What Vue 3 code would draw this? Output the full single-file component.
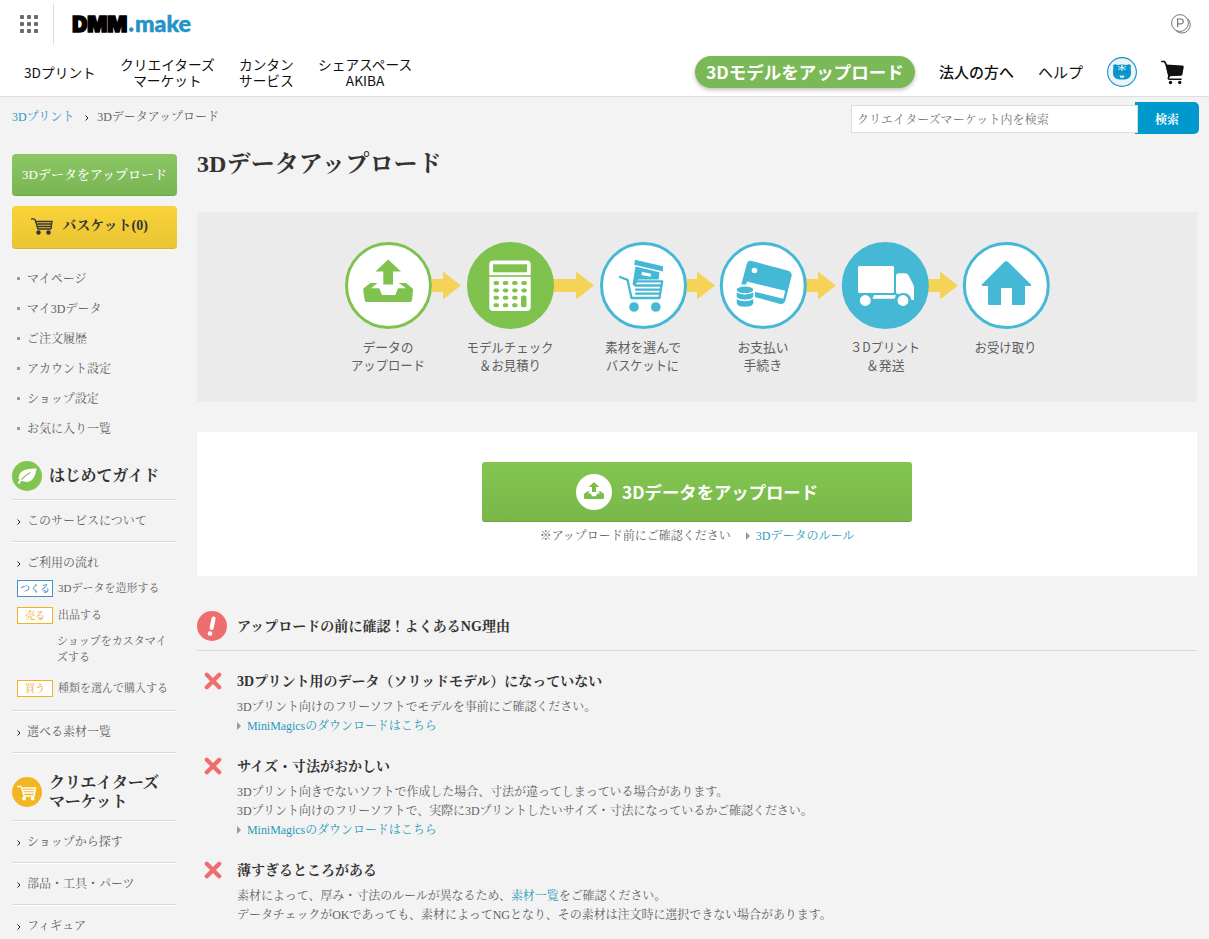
<script setup>
const globalNav = [['3Dプリント'], ['クリエイターズ', 'マーケット'], ['カンタン', 'サービス'], ['シェアスペース', 'AKIBA']]
const myMenu = ['マイページ', 'マイ3Dデータ', 'ご注文履歴', 'アカウント設定', 'ショップ設定', 'お気に入り一覧']
const marketMenu = ['ショップから探す', '部品・工具・パーツ', 'フィギュア']
const dots = [0, 7, 14]
const arrows = [[432, 443], [553, 576], [687, 697], [806, 818], [928, 940]]
const labels = [
  ['データの', 362.5, 352, 51], ['アップロード', 351, 370, 74],
  ['モデルチェック', 466.5, 352, 87], ['＆お見積り', 479, 370, 62],
  ['素材を選んで', 605, 352, 76], ['バスケットに', 606, 370, 73],
  ['お支払い', 737.5, 352, 51], ['手続き', 743.5, 370, 38.5],
  ['３Dプリント', 850, 352, 70], ['＆発送', 866, 370, 38.5],
  ['お受け取り', 974.5, 352, 62]
]
const keys = [[0, 0], [1, 0], [2, 0], [3, 0], [0, 1], [1, 1], [2, 1], [3, 1], [0, 2], [1, 2], [2, 2], [0, 3], [1, 3], [2, 3]]
const reasons = [
  {
    title: '3Dプリント用のデータ（ソリッドモデル）になっていない',
    lines: [['3Dプリント向けのフリーソフトでモデルを事前にご確認ください。']],
    link: 'MiniMagicsのダウンロードはこちら'
  },
  {
    title: 'サイズ・寸法がおかしい',
    lines: [
      ['3Dプリント向きでないソフトで作成した場合、寸法が違ってしまっている場合があります。'],
      ['3Dプリント向けのフリーソフトで、実際に3Dプリントしたいサイズ・寸法になっているかご確認ください。']
    ],
    link: 'MiniMagicsのダウンロードはこちら'
  },
  {
    title: '薄すぎるところがある',
    lines: [
      ['素材によって、厚み・寸法のルールが異なるため、', '素材一覧', 'をご確認ください。'],
      ['データチェックがOKであっても、素材によってNGとなり、その素材は注文時に選択できない場合があります。']
    ]
  }
]
</script>

<template>
  <div class="page" lang="ja">
    <header class="header">
      <div class="top">
        <svg class="apps" width="19" height="19" viewBox="0 0 19 19">
          <template v-for="y in dots" :key="y">
            <rect v-for="x in dots" :key="x" :x="x" :y="y" width="4" height="4" rx="0.8" fill="#6b6b6b" />
          </template>
        </svg>
        <div class="divider"></div>
        <svg class="logo" width="120" height="24" viewBox="0 0 120 24">
          <text class="logo-dmm" x="0.2" y="19.700" textLength="55" lengthAdjust="spacingAndGlyphs">DMM</text>
          <circle cx="59.3" cy="17.6" r="2.3" fill="#2593c5" />
          <text class="logo-make" x="63" y="20" textLength="56" lengthAdjust="spacingAndGlyphs">make</text>
        </svg>
        <svg class="point" width="20" height="20" viewBox="0 0 20 20" fill="none" stroke="#777">
          <circle cx="9" cy="9" r="8.4" />
          <path d="M16.700 4.600A8.400 8.400 0 0 1 5 16.700" />
          <path d="M6.6 13.2V5h3.200a2.400 2.400 0 0 1 0 4.800H6.600" stroke-width="1.200" />
        </svg>
      </div>
      <nav class="nav">
        <a v-for="(item, i) in globalNav" :key="i" class="nav-item">
          <span v-for="line in item" :key="line">{{ line }}</span>
        </a>
        <a class="pill">3Dモデルをアップロード</a>
        <a class="corp">法人の方へ</a>
        <a class="help">ヘルプ</a>
        <svg class="avatar" width="30" height="30" viewBox="0 0 30 30">
          <circle cx="15" cy="15" r="14.4" fill="#edf3f4" stroke="#0b96cc" stroke-width="1.1" />
          <path d="M6.200 10C5.500 7 8.500 6.800 10 8c3-.8 7-.8 10 0 1.500-1.200 4.500-1 3.800 2-.5 1.500.3 2.500.3 5 0 6-3 7.500-9.100 7.500s-9.100-1.500-9.100-7.500c0-2.500.8-3.500.3-5z" fill="#0b96cc" />
          <path d="M11 9.300 14.500 11V8.500h1V11L19 9.300M11 12h8M15 10v4" fill="none" stroke="#d8edf5" stroke-width=".9" />
          <circle cx="10.200" cy="14.800" r="1" fill="#087aa8" /><circle cx="19.800" cy="14.800" r="1" fill="#087aa8" />
          <path d="M12.800 18.500h1.500l.7.700.7-.7h1.500v1.200c0 1.300-4.400 1.300-4.400 0z" fill="#edf3f4" />
        </svg>
        <svg class="cart" width="24" height="25" viewBox="0 0 24 25">
          <path d="M.8 1.500h2.700l1.700 3 3 12.500" fill="none" stroke="#111" stroke-width="1.700" stroke-linecap="round" />
          <path d="M4.500 4.400 21.400 5.600c1 .1 1.500.8 1.300 1.700l-1.300 7.300c-.1.700-.6 1-1.200 1.100L7.600 16.300z" fill="#111" />
          <path d="M8 16.500c-1.500 2-.6 2.800.6 2.800h11.500" fill="none" stroke="#111" stroke-width="1.400" stroke-linecap="round" />
          <circle cx="9.500" cy="22.500" r="1.700" fill="#111" /><circle cx="18.700" cy="22.500" r="1.700" fill="#111" />
        </svg>
      </nav>
    </header>

    <div class="subbar">
      <div class="crumbs">
        <a class="link">3Dプリント</a>
        <svg class="chev" width="4" height="6" viewBox="0 0 4 6"><path d="M.5.5 3 3 .5 5.500" fill="none" stroke="#222" /></svg>
        <span>3Dデータアップロード</span>
      </div>
      <form class="search" @submit.prevent>
        <div class="field">クリエイターズマーケット内を検索</div>
        <button class="go" type="submit">検索</button>
      </form>
    </div>

    <div class="body">
      <aside class="side">
        <a class="btn green">3Dデータをアップロード</a>
        <a class="btn yellow">
          <svg width="22" height="17" viewBox="0 0 22 17" fill="none" stroke="#333" stroke-width="1.300">
            <path d="M0 .8h2.500l1.500.7 3 9.500h13M5.200 3.500h15.800L20 11M6.300 6h14M6.800 8.500h13.500" />
            <g fill="#333" stroke="none"><circle cx="7.500" cy="14.500" r="2.200" /><circle cx="17.500" cy="14.500" r="2.200" /></g>
          </svg>
          バスケット(0)
        </a>
        <ul class="my">
          <li v-for="m in myMenu" :key="m"><span>{{ m }}</span></li>
        </ul>

        <h2 class="side-h guide">
          <svg width="30" height="30" viewBox="0 0 30 30">
            <circle cx="15" cy="15" r="15" fill="#80c550" />
            <path d="M6.700 18C6.500 11 11 7.200 24.800 7.500 23.700 10 24 13 21.500 17c-2.500 4-7 5-11.500 2.800z" fill="#fff" />
            <path d="M6.500 22.500C9 18 12 15 18 11.800" fill="none" stroke="#fff" stroke-width="2" />
            <path d="M9.500 18.500C12 15.500 14.500 13.500 18.500 11.500" fill="none" stroke="#80c550" stroke-width="1.300" />
          </svg>
          <span>はじめてガイド</span>
        </h2>
        <div class="row">
          <svg class="chev" width="4" height="6" viewBox="0 0 4 6"><path d="M.5.5 3 3 .5 5.500" fill="none" stroke="#222" /></svg>このサービスについて
        </div>
        <div class="row flow-row">
          <svg class="chev" width="4" height="6" viewBox="0 0 4 6"><path d="M.5.5 3 3 .5 5.500" fill="none" stroke="#222" /></svg>ご利用の流れ
        </div>
        <div class="flow">
          <div class="tagline"><b class="tag blue">つくる</b><span>3Dデータを造形する</span></div>
          <div class="tagline sell"><b class="tag">売る</b><span>出品する</span></div>
          <p class="custom">ショップをカスタマイズする</p>
          <div class="tagline"><b class="tag">買う</b><span>種類を選んで購入する</span></div>
        </div>
        <div class="row">
          <svg class="chev" width="4" height="6" viewBox="0 0 4 6"><path d="M.5.5 3 3 .5 5.500" fill="none" stroke="#222" /></svg>選べる素材一覧
        </div>
        <h2 class="side-h market">
          <svg width="30" height="30" viewBox="0 0 30 30" fill="none" stroke="#fff" stroke-width="1.300">
            <circle cx="15" cy="15" r="15" fill="#f3b623" stroke="none" />
            <path d="M5.300 9.500H8l1.500.8 2.600 8.700h10.500M10.500 11h13l-1.300 8M11 13.500h12M11.700 16h11" />
            <g fill="#fff" stroke="none"><circle cx="12" cy="21.500" r="1.900" /><circle cx="20.700" cy="21.500" r="1.900" /></g>
          </svg>
          <span>クリエイターズ<br>マーケット</span>
        </h2>
        <div v-for="m in marketMenu" :key="m" class="row">
          <svg class="chev" width="4" height="6" viewBox="0 0 4 6"><path d="M.5.5 3 3 .5 5.500" fill="none" stroke="#222" /></svg>{{ m }}
        </div>
      </aside>

      <main class="main">
        <h1>3Dデータアップロード</h1>

        <svg class="steps" width="1000" height="190" viewBox="197 212 1000 190">
          <path v-for="a in arrows" :key="a[0]" :d="`M${a[0]} 279H${a[1]}V271.500L${a[1] + 18} 285.500 ${a[1]} 299.500V292H${a[0]}z`" fill="#f4d357" />
          <g stroke-width="3">
            <circle cx="388.500" cy="285.500" r="42" fill="#fff" stroke="#7fc24d" />
            <circle cx="510.500" cy="285.500" r="42" fill="#7fc24d" stroke="#7fc24d" />
            <circle cx="643.500" cy="285.500" r="42" fill="#fff" stroke="#44b8d5" />
            <circle cx="763.300" cy="285.500" r="42" fill="#fff" stroke="#44b8d5" />
            <circle cx="885.300" cy="285.500" r="42" fill="#44b8d5" stroke="#44b8d5" />
            <circle cx="1006.300" cy="285.500" r="42" fill="#fff" stroke="#44b8d5" />
          </g>
          <!-- upload tray -->
          <g fill="#7fc24d">
            <path d="M388.200 259.500 401 271.500H393V284.500H383.300V271.500H375.500z" />
            <path d="M370.500 283H377.500L371 288.200H379.300L382 295H395.300L398 288.200H406L398.700 283H406L412.500 288.500Q413.300 289.500 413 291L412 300Q411.700 302 410 302H366.500Q365 302 364.700 300L363.300 291Q363 289 364 288z" />
          </g>
          <!-- calculator -->
          <rect x="489.300" y="260.500" width="41.400" height="50.500" rx="4" fill="#fff" />
          <rect x="493" y="264.300" width="34" height="8" fill="#7fc24d" />
          <rect x="489" y="275.200" width="42" height="1.600" fill="#7fc24d" />
          <g fill="#7fc24d">
            <rect v-for="(k, i) in keys" :key="i" :x="493.500 + k[0] * 9.300" :y="281 + k[1] * 7.400" width="5.500" height="4" rx="1.800" />
            <rect x="521" y="295.500" width="5.500" height="11.800" rx="2" />
          </g>
          <!-- shopping cart with box -->
          <g fill="#44b8d5">
            <path d="M635 259.700 663 266.300V271.500L634.200 264.800z" />
            <path d="M635.500 266.500 659.500 272.200 658.500 279.500H638L635.500 284.500H632.500z" />
            <circle cx="634" cy="307" r="4.800" /><circle cx="655.800" cy="307" r="4.800" />
          </g>
          <path d="m642 271.800 9 2-.5 3-9-1.900z" fill="#fff" />
          <path d="M620 277 627.500 279.800 631.500 298H659.500L662.200 281.300H638.500Q634.500 281.300 634.500 285M635.500 285.500H661M636 289.600H660.500M636 293.700H660" fill="none" stroke="#44b8d5" stroke-width="2.300" stroke-linecap="round" stroke-linejoin="round" />
          <!-- credit card and coins -->
          <path d="M752 261 787.500 270.500Q792.500 272 791.500 276.500L785.500 300Q784 305 779.500 303.700L743.500 294 741 285.500 746.800 264Q748 260 752 261z" fill="#44b8d5" />
          <path d="M747 281.500 785.200 290.800 783.300 298.700 745 289.500z" fill="#fff" />
          <circle cx="754.500" cy="270.500" r="2.800" fill="#fff" />
          <path d="M735 284.500h20v20.500q0 4-10 4t-10-4z" fill="#fff" />
          <g fill="#44b8d5">
            <ellipse cx="745" cy="289.800" rx="8.300" ry="3.300" />
            <path d="M736.700 292.500q8 4 16.600 0v4q-1 3-8.300 3t-8.300-3zM736.700 299.300q8 4 16.600 0v4q-1 3.500-8.300 3.500t-8.300-3.500z" />
          </g>
          <!-- truck -->
          <g fill="#fff">
            <rect x="858" y="266" width="36" height="27" rx="1.500" />
            <path d="M896 276q0-2.700 3-2.700h6q2.500 0 3.500 2l4.500 8.700q1 2 1 4v11q0 1-1 1h-1.500q-1.500-7-8-7-3 0-4.500 1.300l-3-1z" />
            <path d="M874 295h22l-1.500 3.800h-22z" />
          </g>
          <g fill="#fff" stroke="#44b8d5" stroke-width="1.500"><circle cx="865.300" cy="300.500" r="6.200" /><circle cx="903" cy="300.500" r="6.200" /></g>
          <!-- house -->
          <path d="M1004 262.200q2.200-1.800 4.400 0L1031 284.500V286H1025V303.500Q1025 305 1023.500 305H1012V288H1001V305H989.500Q988 305 988 303.500V286H981.800V284.500z" fill="#44b8d5" />
          <text v-for="l in labels" :key="l[0]" class="step-label" :x="l[1]" :y="l[2]" :textLength="l[3]" lengthAdjust="spacingAndGlyphs">{{ l[0] }}</text>
        </svg>

        <section class="upload">
          <a class="big">
            <svg width="36" height="36" viewBox="0 0 36 36">
              <circle cx="18" cy="18" r="18" fill="#fff" />
              <path d="m18 8 5.300 5H20v5h-4v-5h-3.300zM11 17.500h3.200l-2.700 2h3.300l1.200 2.700h4l1.200-2.700h3.300l-2.700-2H25l3 2.500v3.500q0 1.500-1.300 1.500H9.300Q8 25 8 23.500V20z" fill="#7bbd4b" />
            </svg>
            <span>3Dデータをアップロード</span>
          </a>
          <p class="note">※アップロード前にご確認ください<i class="tri"></i><a class="link">3Dデータのルール</a></p>
        </section>

        <h2 class="ng">
          <svg width="30" height="30" viewBox="0 0 30 30">
            <circle cx="15" cy="15" r="15" fill="#ee6d6f" />
            <path d="M16.600 7.500 14.600 17" stroke="#fff" stroke-width="4" stroke-linecap="round" />
            <circle cx="13" cy="22.500" r="2.300" fill="#fff" />
          </svg>
          <span>アップロードの前に確認！よくあるNG理由</span>
        </h2>
        <section v-for="r in reasons" :key="r.title" class="reason">
          <svg width="18" height="18" viewBox="0 0 18 18"><path d="m2.800 2.800 12.400 12.400m0-12.400L2.800 15.200" stroke="#ee6d6f" stroke-width="4.200" stroke-linecap="round" /></svg>
          <div>
            <h3>{{ r.title }}</h3>
            <p v-for="line in r.lines" :key="line[0]"><template v-for="(part, i) in line" :key="i"><a v-if="i === 1" class="link">{{ part }}</a><template v-else>{{ part }}</template></template></p>
            <p v-if="r.link"><i class="tri"></i><a class="link">{{ r.link }}</a></p>
          </div>
        </section>
      </main>
    </div>
  </div>
</template>

<style>
body { margin: 0; background: #f3f3f3; overflow: hidden; }
</style>

<style scoped>
* { box-sizing: border-box; }
.page { width: 1209px; height: 939px; overflow: hidden; background: #f3f3f3; color: #5f5f5f; font: 12px/20px "Liberation Serif", "Noto Serif CJK JP", serif; }
h1, h2, h3, p, ul { margin: 0; padding: 0; }
svg { display: block; flex: none; }
.link { color: #2b9abb; }
.header { height: 97px; background: #fff; border-bottom: 1px solid #ddd; font-family: "Noto Sans CJK JP", sans-serif; color: #111; }
.top { display: flex; height: 48px; padding: 3px 18px 0 20px; }
.apps { margin-top: 12px; }
.divider { width: 1px; height: 42px; margin: 0 18px 0 14px; background: #ddd; }
.logo { margin-top: 9px; overflow: visible; }
.logo-dmm { font: 900 21px Inter, sans-serif; stroke: #000; stroke-width: 1.500px; fill: #000; }
.logo-make { font: 900 22px Lato, sans-serif; fill: #2593c5; stroke: #2593c5; stroke-width: .5px; }
.point { margin: 11px 0 0 auto; }
.nav { display: flex; align-items: center; height: 48px; padding: 0 24px; font-size: 14px; line-height: 16px; }
.nav-item { display: flex; flex-direction: column; align-items: center; margin-right: 24.300px; font-size: 13.700px; white-space: nowrap; }
.pill { width: 220px; height: 32px; margin-left: auto; border-radius: 16px; background: #7ab956; box-shadow: 0 2px 4px rgba(0, 0, 0, .25); color: #fff; font-size: 17.500px; font-weight: 700; line-height: 32px; text-align: center; white-space: nowrap; }
.corp { margin-left: 24px; font-size: 15px; font-weight: 500; }
.help { margin-left: 24px; font-size: 15px; }
.avatar { margin-left: 24px; }
.cart { margin-left: 24px; }
.subbar { display: flex; justify-content: space-between; height: 49px; padding: 5px 10px 0 12px; }
.crumbs { display: flex; align-items: center; height: 30px; }
.crumbs .chev { margin: 1px 8px 0 11px; }
.search { display: flex; height: 32px; width: 348px; }
.field { z-index: 1; width: 287px; height: 28px; margin-top: 3px; padding: 1px 0 0 5px; border: 1px solid #ddd; background: #fff; line-height: 27px; color: #757575; letter-spacing: .1px; }
.go { width: 64px; margin-left: -3px; padding: 3px 0 0; border: 0; border-radius: 0 5px 5px 0; background: #0099ce; color: #fff; font: bold 12px/30px "Liberation Serif", "Noto Serif CJK JP", serif; }
.body { display: flex; gap: 20px; padding-left: 12px; }
.side { width: 165px; padding-top: 8px; }
.btn { display: flex; align-items: center; justify-content: center; border-radius: 4px; white-space: nowrap; }
.green { height: 42px; padding-top: 1px; background: linear-gradient(#8cc665, #79b552); border-bottom: 1px solid #6da648; color: #fff; font-size: 13px; font-weight: 500; }
.yellow { height: 43px; margin-top: 10px; padding: 0 10px 2px 0; gap: 9px; background: linear-gradient(#fad338, #e9c434); border-bottom: 1px solid #d9b520; color: #333; font-size: 14px; font-weight: bold; }
.my { margin-top: 14px; list-style: none; }
.my li { display: flex; align-items: center; height: 30px; padding-left: 5px; }
.my li span { padding-top: 2px; }
.my li::before { content: ""; width: 3px; height: 3px; margin-right: 7px; background: #999; }
.side-h { display: flex; align-items: center; gap: 7px; color: #333; font-size: 16px; line-height: 19px; letter-spacing: -.2px; white-space: nowrap; }
.guide { height: 56px; padding-top: 9px; }
.market { height: 68px; padding-top: 10px; border-top: 1px solid #d9d9d9; box-shadow: inset 0 1px #fff; }
.row { display: flex; align-items: center; height: 42px; padding-left: 5px; border-top: 1px solid #d9d9d9; box-shadow: inset 0 1px #fff; }
.row .chev { margin: 2px 6px 0 0; }
.flow-row { height: 37px; padding-bottom: 0; align-items: flex-start; padding-top: 11px; }
.flow-row .chev { margin-top: 8px; }
.flow { height: 132px; padding-left: 5px; font-size: 11px; line-height: 16px; }
.tagline { display: flex; align-items: center; height: 20px; gap: 5px; white-space: nowrap; }
.tag { width: 36px; height: 17px; border: 1px solid #f0b323; color: #f0a81c; background: #fff; font-size: 10px; font-weight: 500; line-height: 16px; text-align: center; }
.blue { border-color: #458fcb; color: #3486c4; }
.sell { margin-top: 7px; }
.custom { width: 116px; margin: 8px 0 13px 40px; }
.main { width: 1000px; }
h1 { height: 66px; color: #333; font-size: 24px; line-height: 37px; letter-spacing: .1px; }
.step-label { font: 13px "Noto Sans CJK JP", sans-serif; fill: #606060; }
.steps { background: #ebebeb; }
.upload { height: 144px; margin-top: 30px; padding-top: 30px; background: #fff; }
.big { display: flex; align-items: center; width: 430px; height: 60px; margin: 0 auto; padding-left: 94px; gap: 10px; border-radius: 3px; background: linear-gradient(#82c650, #79b74a); border-bottom: 1px solid #6ca63f; color: #fff; font: bold 17.350px/30px "Noto Sans CJK JP", sans-serif; white-space: nowrap; }
.note { display: flex; align-items: center; justify-content: center; height: 28px; }
.tri { display: inline-block; width: 0; height: 0; margin-right: 6px; border: 4px solid transparent; border-left-color: #999; border-right: 0; }
.note .tri { margin-left: 15px; }
.ng { display: flex; align-items: center; gap: 10px; height: 51px; margin-top: 24px; margin-bottom: 20px; padding: 2px 0 0; border-bottom: 1px solid #d9d9d9; color: #333; font-size: 14px; }
.ng span { padding-top: 1px; letter-spacing: .05px; }
.reason { display: flex; gap: 14px; padding-left: 7px; margin-bottom: 21px; }
.reason svg { margin: 1px 1px 0 0; }
.reason h3 { height: 27px; color: #333; font-size: 14px; line-height: 21px; }
.reason p { height: 19px; line-height: 19px; letter-spacing: -.05px; white-space: nowrap; }
.reason + .reason { margin-top: -1px; }
</style>
